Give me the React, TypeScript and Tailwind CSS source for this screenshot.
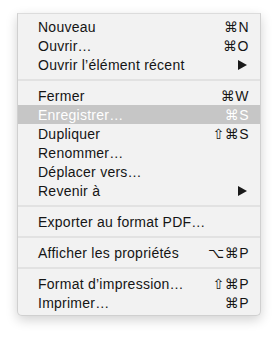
import React from 'react';

type Item =
  | { kind: 'sep' }
  | { kind: 'item'; label: string; shortcut?: string; submenu?: boolean; active?: boolean };

const items: Item[] = [
  { kind: 'item', label: 'Nouveau', shortcut: '⌘N' },
  { kind: 'item', label: 'Ouvrir…', shortcut: '⌘O' },
  { kind: 'item', label: 'Ouvrir l’élément récent', submenu: true },
  { kind: 'sep' },
  { kind: 'item', label: 'Fermer', shortcut: '⌘W' },
  { kind: 'item', label: 'Enregistrer…', shortcut: '⌘S', active: true },
  { kind: 'item', label: 'Dupliquer', shortcut: '⇧⌘S' },
  { kind: 'item', label: 'Renommer…' },
  { kind: 'item', label: 'Déplacer vers…' },
  { kind: 'item', label: 'Revenir à', submenu: true },
  { kind: 'sep' },
  { kind: 'item', label: 'Exporter au format PDF…' },
  { kind: 'sep' },
  { kind: 'item', label: 'Afficher les propriétés', shortcut: '⌥⌘P' },
  { kind: 'sep' },
  { kind: 'item', label: 'Format d’impression…', shortcut: '⇧⌘P' },
  { kind: 'item', label: 'Imprimer…', shortcut: '⌘P' },
];

const App: React.FC = () => {
  return (
    <div className="w-[277px] h-[337px] bg-white pt-[13px] pl-[17px] font-['Liberation_Sans','DejaVu_Sans',sans-serif]">
      <div className="w-[244px] bg-[#f2f2f2] border border-[#d0d0d0] border-t-[#dcdcdc] rounded-b-[5px] shadow-[0_4px_12px_rgba(0,0,0,0.18)] py-[3px]">
        {items.map((it, i) =>
          it.kind === 'sep' ? (
            <div key={i} className="h-[12px] flex items-center">
              <div className="w-full h-[2px] bg-[#e2e2e2]"></div>
            </div>
          ) : (
            <div
              key={i}
              className={`h-[19px] flex items-center justify-between pl-[20px] pr-[11px] text-[14px] leading-none ${
                it.active ? 'bg-[#c6c6c6] text-white' : 'text-[#151515]'
              }`}
            >
              <span className="tracking-[0.25px]">{it.label}</span>
              {it.shortcut && <span className="tracking-[0.5px]">{it.shortcut}</span>}
              {it.submenu && (
                <svg width="9" height="10" viewBox="0 0 9 10" className="mr-[2px]">
                  <path d="M0 0 L9 5 L0 10 Z" fill="#1a1a1a" />
                </svg>
              )}
            </div>
          )
        )}
      </div>
    </div>
  );
};

export default App;
